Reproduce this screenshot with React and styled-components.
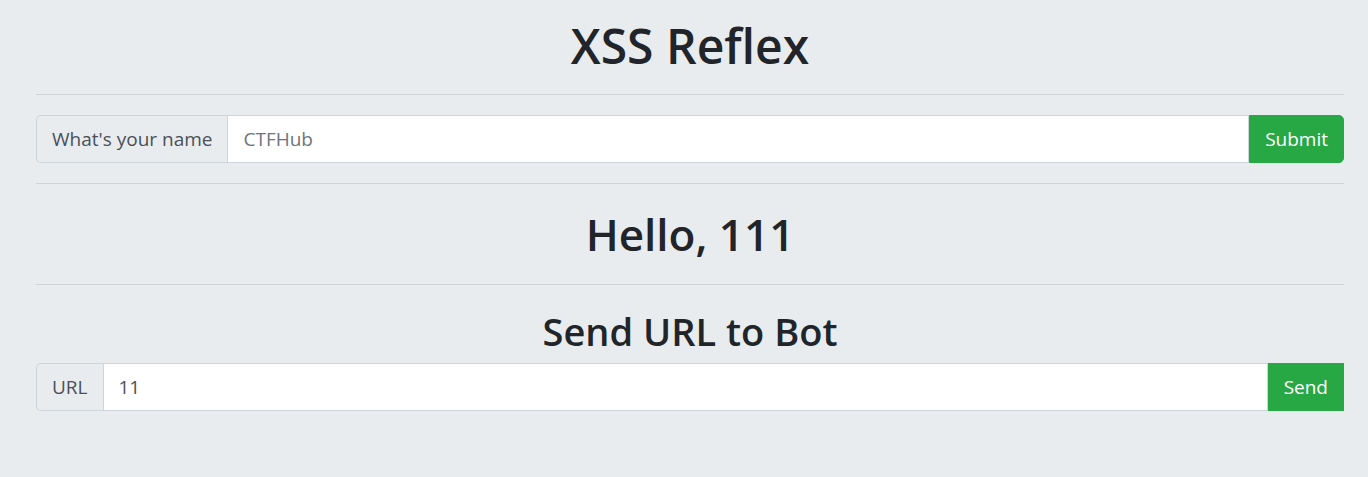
import styled, { createGlobalStyle } from "styled-components"

const GlobalStyle = createGlobalStyle`
    html, body {
        margin: 0;
        background: #e9ecef;
        font-family: "Open Sans", "Noto Sans", sans-serif;
        color: #212529;
    }
`

const Page = styled.main`
    padding: 17px 24px 40px 36px;
    min-height: 477px;
    box-sizing: border-box;
`

const Heading = styled.h1`
    margin: 0;
    text-align: center;
    font-weight: 600;
    font-size: ${(p) => p.size}px;
    line-height: ${(p) => p.lh}px;
`

const Rule = styled.hr`
    border: 0;
    border-top: 1px solid rgba(0, 0, 0, 0.1);
    margin: ${(p) => p.top}px 0 ${(p) => p.bottom}px;
`

const InputGroup = styled.form`
    display: flex;
    height: 48px;
    box-sizing: border-box;
    font-size: 19px;
    margin-top: ${(p) => p.top || 0}px;
`

const Addon = styled.span`
    display: flex;
    align-items: center;
    padding: 0 15px;
    background: #e9ecef;
    color: #495057;
    border: 1px solid #ced4da;
    border-right: 0;
    border-radius: 5px 0 0 5px;
    white-space: nowrap;
`

const Field = styled.input`
    flex: 1;
    min-width: 0;
    height: 48px;
    box-sizing: border-box;
    border: 1px solid #ced4da;
    background: #fff;
    color: #495057;
    padding: 0 15px;
    font: inherit;
    outline: none;

    &::placeholder {
        color: #6c757d;
    }
`

const Button = styled.button`
    background: #28a745;
    border: 1px solid #28a745;
    color: #fff;
    font: inherit;
    padding: 0 15px;
    border-radius: ${(p) => (p.rounded ? "0 5px 5px 0" : "0")};
    cursor: pointer;
`

function App() {
    return (
        <>
            <GlobalStyle />
            <Page>
                <Heading size={48} lh={58}>XSS Reflex</Heading>
                <Rule top={19} bottom={20} />
                <InputGroup onSubmit={(e) => e.preventDefault()}>
                    <Addon>What's your name</Addon>
                    <Field placeholder="CTFHub" />
                    <Button rounded>Submit</Button>
                </InputGroup>
                <Rule top={20} bottom={20} />
                <Heading size={44} lh={60}>Hello, 111</Heading>
                <Rule top={20} bottom={20} />
                <Heading size={38} lh={52}>Send URL to Bot</Heading>
                <InputGroup top={6} onSubmit={(e) => e.preventDefault()}>
                    <Addon>URL</Addon>
                    <Field defaultValue="11" />
                    <Button>Send</Button>
                </InputGroup>
            </Page>
        </>
    )
}

export default App
